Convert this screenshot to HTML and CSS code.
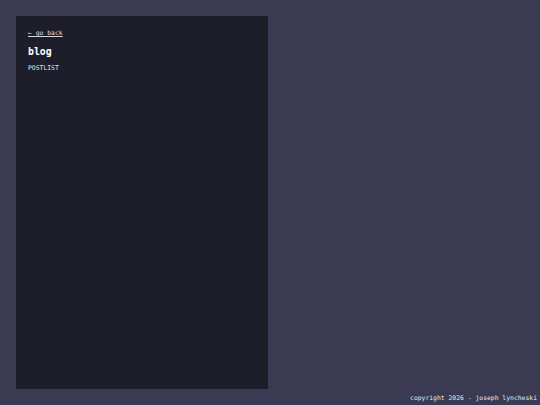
FILE: index.html
```html
<!DOCTYPE html>
<html>
<head>
<meta charset="utf-8">
<link rel="stylesheet" href="styles.css">
</head>
<body>
<div class="page">
  <main class="panel">
    <a class="back" href="#">← go back</a>
    <h1 class="title">blog</h1>
    <div class="postlist">POSTLIST</div>
  </main>
  <footer class="footer">copyright 2026 - joseph lyncheski</footer>
</div>
</body>
</html>
```
FILE: styles.css
```css
html, body {
  margin: 0;
  padding: 0;
  background: #3a3a52;
  font-family: "DejaVu Sans Mono", monospace;
  color: #e8e8ee;
}
.page {
  height: 405px;
  display: flex;
  flex-direction: column;
  box-sizing: border-box;
  padding-top: 16px;
}
.panel {
  margin-left: 16px;
  width: 252px;
  height: 373px;
  background: #1e1e2a;
  box-sizing: border-box;
  padding: 13px 12px;
  display: flex;
  flex-direction: column;
  align-items: flex-start;
}
.back {
  font-size: 6.4px;
  color: #d8d8e0;
  text-decoration: underline;
  line-height: 8px;
}
.title {
  margin: 9px 0 0;
  font-size: 9.8px;
  font-weight: bold;
  color: #ffffff;
  line-height: 12px;
}
.postlist {
  margin-top: 6px;
  font-size: 6.4px;
  line-height: 8px;
  color: #e0e0e6;
}
.footer {
  margin-top: auto;
  text-align: right;
  padding: 0 3px 3px 0;
  font-size: 6.4px;
  line-height: 8px;
  color: #e8e8ee;
}
```
